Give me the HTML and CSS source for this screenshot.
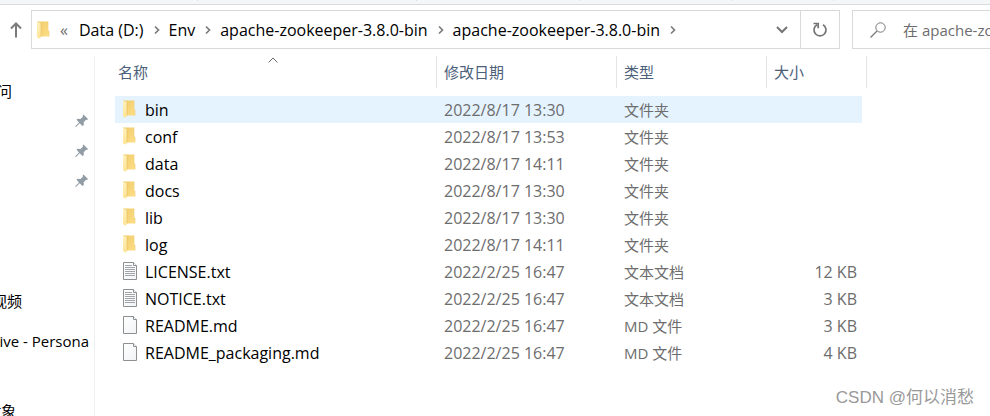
FILE: index.html
```html
<!DOCTYPE html>
<html lang="zh-CN">
<head>
    <meta charset="UTF-8">
    <meta name="viewport" content="width=device-width, initial-scale=1.0">
    <title>apache-zookeeper-3.8.0-bin</title>
    <link rel="stylesheet" href="styles.css">
</head>
<body>
<!-- Shared icons -->
<svg class="sprite" aria-hidden="true">
  <defs>
    <linearGradient id="folderBack" x1="0" y1="0" x2="1" y2="1">
      <stop offset="0" stop-color="#efca69"/>
      <stop offset="1" stop-color="#ffe08a"/>
    </linearGradient>
    <linearGradient id="folderFlap" x1="0" y1="0" x2="0" y2="1">
      <stop offset="0" stop-color="#fff0bd"/>
      <stop offset="1" stop-color="#ffe596"/>
    </linearGradient>
    <linearGradient id="paper" x1="0" y1="0" x2="1" y2="1">
      <stop offset="0" stop-color="#ffffff"/>
      <stop offset="1" stop-color="#f1f3f5"/>
    </linearGradient>
  </defs>
  <symbol id="folder" viewBox="0 0 14 18">
    <path d="M0 0.5H11V10H12V15.500H3V17.500L0 16z" fill="url(#folderBack)"/>
    <path d="M11 0.500V10H12V15.500" fill="none" stroke="#eecb70" stroke-width="0.6"/>
    <path d="M0 0.500L4 2.500V15.500L3 17.500L0 16z" fill="url(#folderFlap)"/>
    <path d="M4 2.500V15.500" stroke="#e5bd59" stroke-width="0.600"/>
  </symbol>
  <symbol id="doc" viewBox="0 0 14 18">
    <path d="M0.500 0.500H10.500L13.500 3.500V17.500H0.500z" fill="url(#paper)" stroke="#8d9092"/>
    <path d="M10.500 0.500V3.500H13.500" fill="#fff" stroke="#8d9092"/>
  </symbol>
  <symbol id="text-doc" viewBox="0 0 14 18">
    <use href="#doc"/>
    <path d="M2 3.500H9M2 5.500H12M2 7.500H12M2 9.500H12M2 11.500H12M2 13.500H12" stroke="#a2a5a7"/>
  </symbol>
  <symbol id="pin" viewBox="0 0 14 14">
    <path d="M8.500 0.500L13 5L12 6L11 5.800L8.700 8.300L8.800 11L7.500 12L4.700 9.300L1 13L0.300 12.800L0.500 12L4 8.500L1.500 5.800L2.500 4.800L5.500 4.900L8 2.600L7.700 1.400z" fill="#929ca5"/>
  </symbol>
  <symbol id="chevron" viewBox="0 0 6 10">
    <path d="M1 1.500L4.500 5L1 8.500" fill="none" stroke="#7b7b7b" stroke-width="1.700"/>
  </symbol>
</svg>

<!-- Ribbon edge -->
<div class="ribbon">
  <span class="ribbon-group group-clipboard"></span>
  <span class="ribbon-group group-organize"></span>
  <span class="ribbon-group group-new"></span>
  <span class="ribbon-group group-open"></span>
  <span class="ribbon-group group-select"></span>
</div>

<!-- Address bar -->
<header class="toolbar">
  <button class="up-btn" type="button" aria-label="向上">
    <svg width="12" height="16" viewBox="0 0 12 16"><path d="M6 15.500V1.500M1 6.500L6 1.500L11 6.500" fill="none" stroke="#7b7b7b" stroke-width="2"/></svg>
  </button>
  <div class="address">
    <svg class="icon"><use href="#folder"/></svg>
    <nav class="crumbs" aria-label="路径">
      <span class="more">«</span>
      <a href="#">Data (D:)</a>
      <svg class="chevron"><use href="#chevron"/></svg>
      <a href="#">Env</a>
      <svg class="chevron"><use href="#chevron"/></svg>
      <a href="#">apache-zookeeper-3.8.0-bin</a>
      <svg class="chevron"><use href="#chevron"/></svg>
      <a href="#">apache-zookeeper-3.8.0-bin</a>
      <svg class="chevron"><use href="#chevron"/></svg>
    </nav>
    <button class="history-btn" type="button" aria-label="历史记录">
      <svg width="12" height="8" viewBox="0 0 12 8"><path d="M1 1L6 6L11 1" fill="none" stroke="#757575" stroke-width="2"/></svg>
    </button>
    <button class="refresh-btn" type="button" aria-label="刷新">
      <svg width="16" height="16" viewBox="0 0 16 16"><path d="M11 2.700A6 6 0 1 1 5 2.700M1.500 1.500H6.200V6.200" fill="none" stroke="#757575" stroke-width="1.700"/></svg>
    </button>
  </div>
  <div class="search">
    <svg width="16" height="16" viewBox="0 0 16 16"><circle cx="10.500" cy="5.500" r="4.700" fill="none" stroke="#777"/><path d="M7 9L0.500 15.500" stroke="#777" stroke-width="1.200"/></svg>
    <input type="text" aria-label="搜索" placeholder="在 apache-zookeeper-3.8.0-bin 中搜索">
  </div>
</header>

<main class="explorer">
  <!-- Navigation pane -->
  <nav class="sidebar" aria-label="导航窗格">
    <a class="item" href="#">快速访问</a>
    <div class="item pinned"><svg class="pin"><use href="#pin"/></svg></div>
    <div class="item pinned"><svg class="pin"><use href="#pin"/></svg></div>
    <div class="item pinned"><svg class="pin"><use href="#pin"/></svg></div>
    <a class="item videos" href="#">视频</a>
    <a class="item onedrive" href="#">OneDrive - Persona</a>
    <a class="item objects" href="#">3D 对象</a>
  </nav>

  <!-- File list -->
  <table class="files">
    <thead>
      <tr>
        <th class="col-name" aria-sort="ascending">名称
          <svg class="sort" width="10" height="6" viewBox="0 0 10 6"><path d="M0.500 5.500L5 1L9.500 5.500" fill="none" stroke="#6b6b6b"/></svg>
        </th>
        <th class="col-date">修改日期</th>
        <th class="col-type">类型</th>
        <th class="col-size">大小</th>
      </tr>
    </thead>
    <tbody>
      <tr class="selected"><td class="name"><svg class="icon"><use href="#folder"/></svg>bin</td><td>2022/8/17 13:30</td><td class="type">文件夹</td><td class="size"></td></tr>
      <tr><td class="name"><svg class="icon"><use href="#folder"/></svg>conf</td><td>2022/8/17 13:53</td><td class="type">文件夹</td><td class="size"></td></tr>
      <tr><td class="name"><svg class="icon"><use href="#folder"/></svg>data</td><td>2022/8/17 14:11</td><td class="type">文件夹</td><td class="size"></td></tr>
      <tr><td class="name"><svg class="icon"><use href="#folder"/></svg>docs</td><td>2022/8/17 13:30</td><td class="type">文件夹</td><td class="size"></td></tr>
      <tr><td class="name"><svg class="icon"><use href="#folder"/></svg>lib</td><td>2022/8/17 13:30</td><td class="type">文件夹</td><td class="size"></td></tr>
      <tr><td class="name"><svg class="icon"><use href="#folder"/></svg>log</td><td>2022/8/17 14:11</td><td class="type">文件夹</td><td class="size"></td></tr>
      <tr><td class="name"><svg class="icon"><use href="#text-doc"/></svg>LICENSE.txt</td><td>2022/2/25 16:47</td><td class="type">文本文档</td><td class="size">12 KB</td></tr>
      <tr><td class="name"><svg class="icon"><use href="#text-doc"/></svg>NOTICE.txt</td><td>2022/2/25 16:47</td><td class="type">文本文档</td><td class="size">3 KB</td></tr>
      <tr><td class="name"><svg class="icon"><use href="#doc"/></svg>README.md</td><td>2022/2/25 16:47</td><td class="type">MD 文件</td><td class="size">3 KB</td></tr>
      <tr><td class="name"><svg class="icon"><use href="#doc"/></svg>README_packaging.md</td><td>2022/2/25 16:47</td><td class="type">MD 文件</td><td class="size">4 KB</td></tr>
    </tbody>
  </table>
</main>

<div class="watermark">CSDN @何以消愁</div>
</body>
</html>
```
FILE: styles.css
```css
* {
  box-sizing: border-box;
}

body {
  margin: 0;
  min-height: 100vh;
  display: flex;
  flex-direction: column;
  overflow: hidden;
  background-color: #fff;
  color: #000;
  font-family: "Open Sans", "Noto Sans CJK SC", sans-serif;
  font-size: 15px;
  line-height: 20px;
}

a {
  color: inherit;
  text-decoration: none;
}

button {
  display: flex;
  align-items: center;
  justify-content: center;
  padding: 0;
  border: none;
  background: none;
  cursor: pointer;
}

svg {
  flex: none;
}

.sprite {
  position: absolute;
  width: 0;
  height: 0;
}

.icon {
  width: 14px;
  height: 18px;
}

/* Ribbon */
.ribbon {
  display: flex;
  height: 5px;
  background-color: #f5f6f7;
  border-bottom: 1px solid #dadbdc;
}

.ribbon-group {
  height: 1px;
  border-right: 1px solid #dcdddf;
}

.group-clipboard {
  width: 198px;
}

.group-organize {
  width: 219px;
}

.group-new {
  width: 163px;
}

.group-open {
  width: 152px;
}

.group-select {
  width: 102px;
}

/* Address bar */
.toolbar {
  display: flex;
  height: 51px;
  padding: 5px 0 7px;
  font-size: 16px;
}

.up-btn {
  width: 31px;
}

.address {
  flex: 1;
  display: flex;
  align-items: center;
  padding-left: 5px;
  border: 1px solid #d9d9d9;
}

.crumbs {
  flex: 1;
  display: flex;
  align-items: center;
  white-space: nowrap;
}

.more {
  width: 28px;
  padding-left: 9px;
  color: #6d6d6d;
}

.chevron {
  width: 6px;
  height: 10px;
  margin: 0 9px 0 10px;
}

.history-btn {
  width: 36px;
  height: 100%;
}

.refresh-btn {
  width: 39px;
  height: 100%;
  border-left: 1px solid #d9d9d9;
}

.search {
  display: flex;
  align-items: center;
  gap: 17px;
  width: 138px;
  margin-left: 12px;
  padding-left: 17px;
  border: 1px solid #d9d9d9;
  border-right: none;
}

.search input {
  flex: 1;
  min-width: 0;
  padding: 0;
  border: none;
  outline: none;
  background: none;
  font-family: inherit;
  font-size: 15px;
}

.search input::placeholder {
  color: #6d6d6d;
  opacity: 1;
}

/* Navigation pane */
.explorer {
  flex: 1;
  display: flex;
}

.sidebar {
  display: flex;
  flex-direction: column;
  width: 143px;
  margin-left: -48px;
  padding-top: 20px;
  border-right: 1px solid #f0f0f0;
  white-space: nowrap;
}

.item {
  display: flex;
  align-items: center;
  height: 30px;
}

.pinned {
  justify-content: flex-end;
  padding-right: 5px;
}

.pin {
  width: 14px;
  height: 14px;
}

.videos {
  margin-top: 90px;
  padding-left: 40px;
}

.onedrive {
  margin-top: 10px;
  justify-content: flex-end;
  padding-right: 5px;
}

.objects {
  margin-top: 40px;
  padding-left: 11px;
}

/* File list */
.files {
  width: 752px;
  margin-left: 20px;
  align-self: flex-start;
  table-layout: fixed;
  border-collapse: separate;
  border-spacing: 0;
}

.files th {
  position: relative;
  height: 32px;
  padding: 0 0 0 7px;
  border-right: 1px solid #e5e5e5;
  color: #4c607a;
  font-weight: normal;
  text-align: left;
}

.files th.col-name {
  width: 322px;
  padding-left: 3px;
}

.col-date {
  width: 180px;
}

.col-type {
  width: 150px;
}

.sort {
  position: absolute;
  top: 1px;
  left: 50%;
  margin-left: -8px;
}

.files tbody::before {
  content: "";
  display: block;
  height: 8px;
}

.files td {
  height: 27px;
  padding: 0 0 0 7px;
  color: #6d6d6d;
  font-size: 16px;
}

.files td.name {
  padding-left: 8px;
  color: #000;
}

.files td.type {
  font-size: 15px;
}

.name .icon {
  margin-right: 8px;
  vertical-align: -2px;
}

/* the row highlight stops short of the last column's edge */
.files td.size {
  padding-right: 5px;
  border-right: 5px solid transparent;
  background-clip: padding-box;
  text-align: right;
}

.selected td {
  background-color: #e5f3ff;
}

/* Watermark */
.watermark {
  position: absolute;
  right: 16px;
  bottom: 6px;
  color: #999;
  font-family: "Liberation Sans", "Noto Sans CJK SC", sans-serif;
  font-size: 17px;
  line-height: 24px;
}
```
